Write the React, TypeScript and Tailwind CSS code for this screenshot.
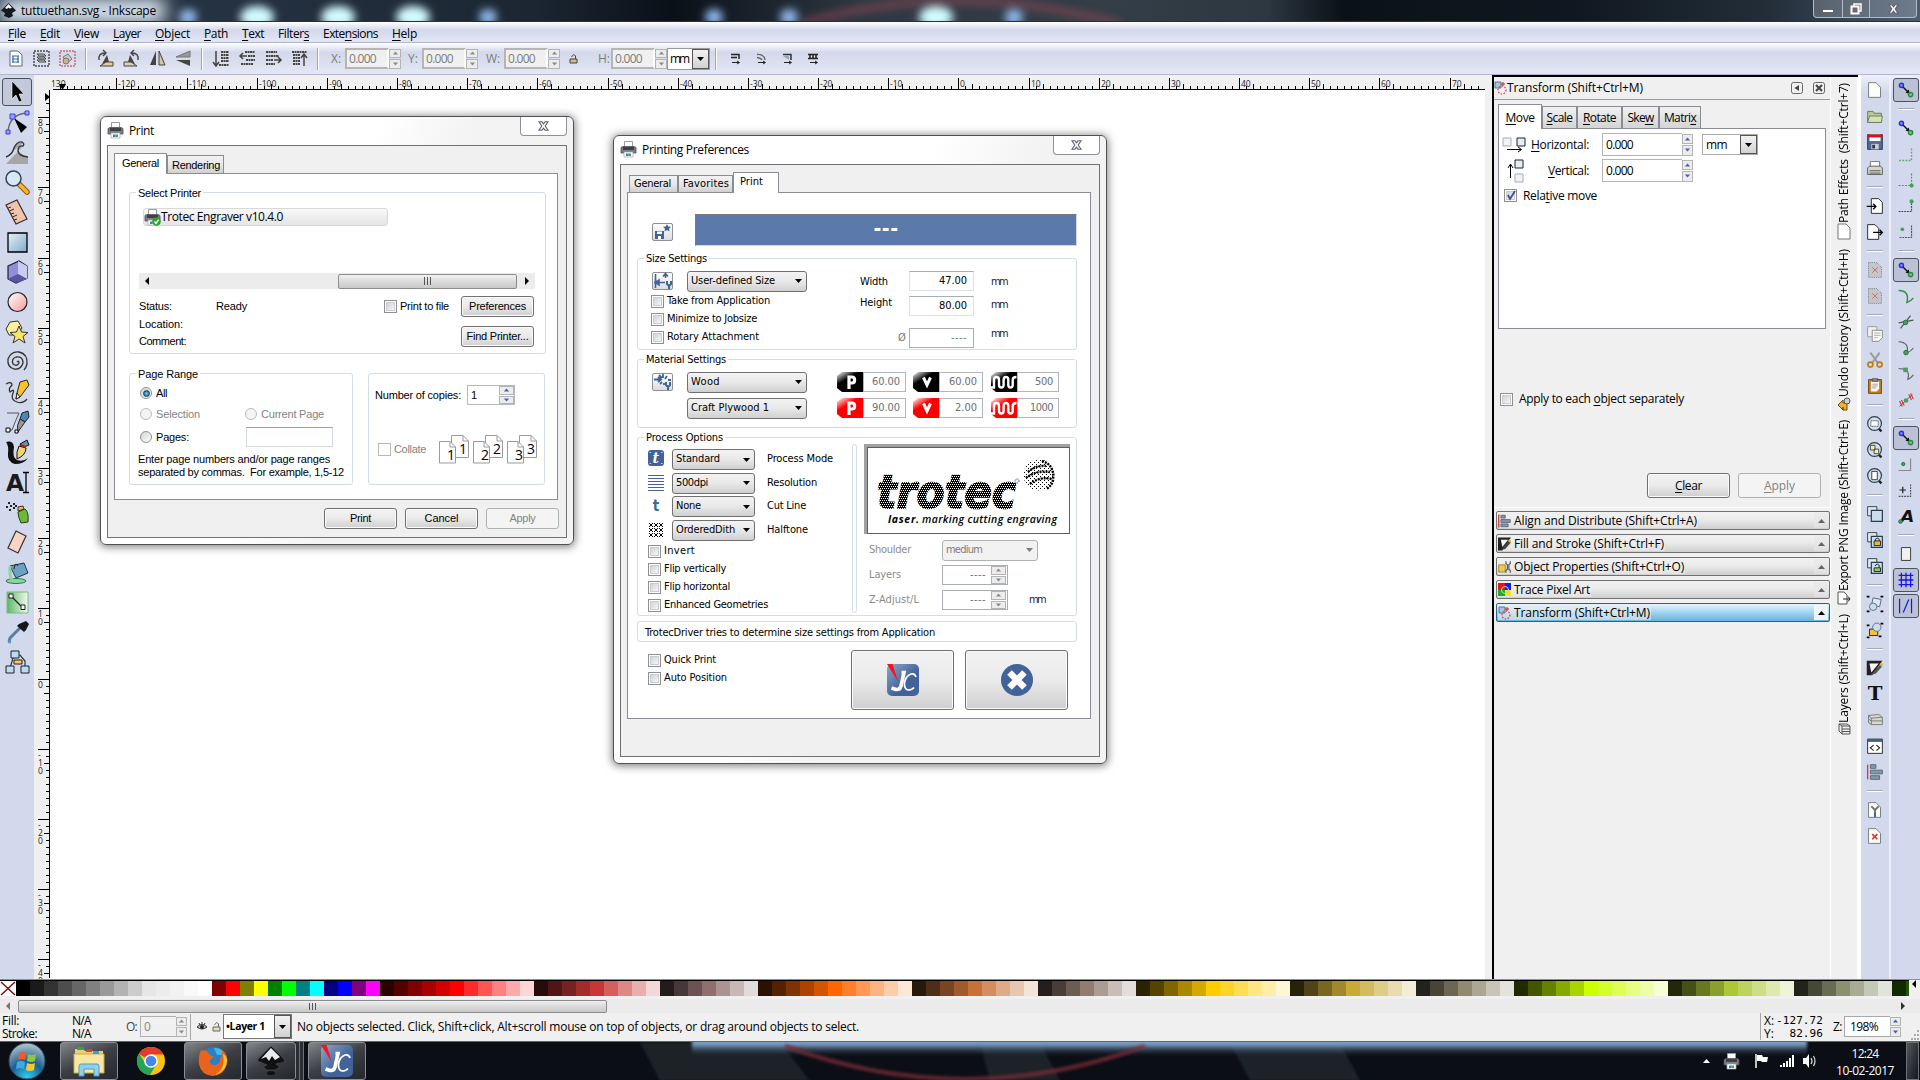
import React, { useLayoutEffect, useRef } from "react";

const UI = "font-['Open_Sans','Noto_Sans',sans-serif]";
const TAHOMA = "font-['DejaVu_Sans_Condensed','DejaVu_Sans',sans-serif]";

/* A single line of text. "_" marks the mnemonic letter, w is the line's length in pixels. */
function T({ t, w, className = "", v = false }: { t: string; w?: number; className?: string; v?: boolean }) {
  const ref = useRef<HTMLSpanElement>(null);
  useLayoutEffect(() => {
    const el = ref.current;
    if (!el || !w) return;
    el.style.letterSpacing = "0px";
    const box = el.getBoundingClientRect();
    const n = t.replace("_", "").length;
    el.style.letterSpacing = `${(w - (v ? box.height : box.width)) / n}px`;
  }, [t, w, v]);
  const i = t.indexOf("_");
  return (
    <span ref={ref} className={`inline-block shrink-0 justify-self-start whitespace-pre ${className}`}>
      {i < 0 ? t : (
        <>
          {i > 0 && t.slice(0, i)}
          <span className="underline underline-offset-2">{t[i + 1]}</span>
          {i + 2 < t.length && t.slice(i + 2)}
        </>
      )}
    </span>
  );
}

function Svg({ w, h, vb, className = "", children }: { w: number; h?: number; vb?: string; className?: string; children: React.ReactNode }) {
  return (
    <svg width={w} height={h ?? w} viewBox={vb ?? `0 0 ${w} ${h ?? w}`} fill="none" className={`shrink-0 overflow-visible ${className}`}>
      {children}
    </svg>
  );
}

function Arrow({ dir, className = "" }: { dir: "up" | "down" | "left" | "right"; className?: string }) {
  const d = { up: "M0 4L3.500 0L7 4Z", down: "M0 0L7 0L3.500 4Z", left: "M4 0L4 8L0 4Z", right: "M0 0L4 4L0 8Z" }[dir];
  const side = dir === "left" || dir === "right";
  return (
    <Svg w={side ? 4 : 7} h={side ? 8 : 4} className={className}>
      <path d={d} fill="currentColor" />
    </Svg>
  );
}

function Spin({ className = "", off = false }: { className?: string; off?: boolean }) {
  return (
    <div className={`flex shrink-0 flex-col gap-px ${off ? "text-[#8a8a8a]" : "text-[#4a5fb0]"} ${className}`}>
      <div className="flex flex-1 items-center justify-center border border-[#b4b4b4] bg-[#ececec]"><Arrow dir="up" className="scale-75" /></div>
      <div className="flex flex-1 items-center justify-center border border-[#b4b4b4] bg-[#ececec]"><Arrow dir="down" className="scale-75" /></div>
    </div>
  );
}

function Btn({ className = "", off = false, children }: { className?: string; off?: boolean; children: React.ReactNode }) {
  return (
    <div className={`flex shrink-0 items-center justify-center rounded-[3px] border ${off ? "border-[#adb2b5] bg-[#f4f4f4] text-[#838383]" : "border-[#707070] bg-linear-to-b from-[#f2f2f2] from-0% via-[#ebebeb] via-48% to-[#cfcfcf] shadow-[inset_0_0_0_1px_#fbfbfb]"} ${className}`}>
      {children}
    </div>
  );
}

function Combo({ className = "", off = false, label, w }: { className?: string; off?: boolean; label: string; w?: number }) {
  return (
    <div className={`flex shrink-0 items-center justify-between rounded-[3px] border pr-1 pl-[3px] ${off ? "border-[#adb2b5] bg-[#f2f2f2] text-[#7c7c7c]" : "border-[#707070] bg-linear-to-b from-[#f3f3f3] from-0% via-[#e9e9e9] via-48% to-[#d0d0d0]"} ${className}`}>
      <T t={label} w={w} />
      <Arrow dir="down" />
    </div>
  );
}

function Box({ on = false, off = false }: { on?: boolean; off?: boolean }) {
  return (
    <div className={`flex size-[13px] shrink-0 items-center justify-center border bg-white ${off ? "border-[#b8b8b8]" : "border-[#8e8f8f]"}`}>
      <div className={`size-[9px] ${off ? "" : "border border-[#c9cdd2] bg-linear-to-br from-[#cfd4d9] to-[#f6f6f6]"}`}>
        {on && (
          <Svg w={9} className="-mt-px">
            <path d="M1 4L3 8L8 0" stroke="#3a4f9c" strokeWidth="1.800" />
          </Svg>
        )}
      </div>
    </div>
  );
}

function Check({ label, w, className = "", off = false }: { label: string; w?: number; className?: string; off?: boolean }) {
  return (
    <div className={`flex h-[18px] shrink-0 items-center gap-[3px] ${off ? "text-[#838383]" : ""} ${className}`}>
      <Box off={off} />
      <T t={label} w={w} />
    </div>
  );
}

function Radio({ label, w, on = false, off = false, className = "" }: { label: string; w?: number; on?: boolean; off?: boolean; className?: string }) {
  return (
    <div className={`flex shrink-0 items-center gap-1 ${off ? "text-[#838383]" : ""} ${className}`}>
      <div className={`flex size-3 items-center justify-center rounded-full border ${off ? "border-[#bcbcbc] bg-[#f4f4f4]" : "border-[#8e8f8f] bg-linear-to-br from-[#d4d4d4] to-white"}`}>
        {on && <div className="size-[7px] rounded-full border border-[#173a5c] bg-radial from-[#6fd0f5] to-[#12527e]" />}
      </div>
      <T t={label} w={w} />
    </div>
  );
}

function Group({ title, w, className = "", children }: { title?: string; w?: number; className?: string; children?: React.ReactNode }) {
  return (
    <div className={`relative shrink-0 rounded-[3px] border border-[#d2dde6] ${className}`}>
      {title && (
        <div className="absolute -top-[8px] left-[6px] flex h-4 items-center bg-white px-[2px]">
          <T t={title} w={w} />
        </div>
      )}
      {children}
    </div>
  );
}

function PrinterIcon({ ok = false, s = 17 }: { ok?: boolean; s?: number }) {
  return (
    <Svg w={s} vb="0 0 17 17">
      <path d="M4.500 .5H12.500V7H4.500Z" fill="#fff" stroke="#9a9a9a" />
      <path d="M1 6.500L3 5.500H14L16 6.500V12H1Z" fill="#7b7f84" stroke="#4b4e52" strokeWidth=".8" />
      <path d="M3 6H14V9H3Z" fill="#3e4145" />
      <path d="M4 11H13V16H4Z" fill="#fff" stroke="#a5a5a5" strokeWidth=".7" />
      <path d="M6 12.500H8.500V15H6Z" fill="#2f7fd1" />
      <path d="M8.500 12.500H11V15H8.500Z" fill="#3ba55a" />
      {ok && (
        <>
          <circle cx="12.500" cy="12.500" r="4.300" fill="#2ba52b" />
          <path d="M10.500 12.500L12 14.300L14.700 10.800" stroke="#fff" strokeWidth="1.400" />
        </>
      )}
    </Svg>
  );
}

function CloseX() {
  return (
    <Svg w={11} h={10}>
      <path d="M1 .8H4L5.500 2.800L7 .8H10L7.200 5L10 9.200H7L5.500 7.200L4 9.200H1L3.800 5Z" fill="#fff" stroke="#5d6070" strokeWidth="1.100" />
    </Svg>
  );
}

function Dialog({ title, tw, className, children }: { title: string; tw: number; className: string; children: React.ReactNode }) {
  return (
    <div className={`absolute flex flex-col rounded-[6px] border border-[#4f5154] bg-linear-110 from-white from-0% via-white via-45% to-[#f3f3f3] to-60% px-[6px] pb-[6px] shadow-[0_1px_9px_1px_rgba(0,0,0,0.5)] ${className}`}>
      <div className={`flex h-[28px] shrink-0 items-start text-[12px] ${UI}`}>
        <div className="flex h-[27px] items-center gap-[5px]"><PrinterIcon /><T t={title} w={tw} /></div>
        <div className="ml-auto flex h-[19px] w-[47px] items-center justify-center rounded-b-[4px] border border-t-0 border-[#8e9099] bg-white"><CloseX /></div>
      </div>
      <div className="flex min-h-0 flex-1 flex-col border border-[#6f7175] bg-[#f0f0f0]">{children}</div>
    </div>
  );
}

function Tab({ t, w, on = false, className = "" }: { t: string; w: number; on?: boolean; className?: string }) {
  return (
    <div className={`flex shrink-0 items-center border border-b-0 border-[#898c95] ${on ? "relative z-10 -mb-px bg-white pb-[2px]" : "bg-linear-to-b from-[#f2f2f2] via-[#e8e8e8] to-[#d0d0d0] pt-px"} ${className}`}>
      <T t={t} w={w} />
    </div>
  );
}

/* ---------- Print dialog ---------- */

function PageStack({ n }: { n: string }) {
  return (
    <Svg w={30} h={30}>
      <path d="M12.500 1.500H24L29.500 7V23.500H12.500Z" fill="#fff" stroke="#9b9b9b" />
      <path d="M24 1.500V7H29.500" stroke="#9b9b9b" />
      <path d="M.5 7.500H11L16.500 13V29H.5Z" fill="#fff" stroke="#9b9b9b" />
      <path d="M11 7.500V13H16.500" stroke="#9b9b9b" />
      <text x="20" y="20" fontFamily="Open Sans" fontSize="14" fill="#000">{n}</text>
      <text x="8" y="26" fontFamily="Open Sans" fontSize="14" fill="#000">{n}</text>
    </Svg>
  );
}

function PrintDialog() {
  return (
    <Dialog title="Print" tw={25} className="top-[116px] left-[100px] h-[429px] w-[474px]">
      <div className="flex flex-1 flex-col pt-[7px] pl-[6px] font-['Liberation_Sans',sans-serif] text-[11px] text-black">
        <div className="flex h-5 items-end">
          <Tab t="General" w={37} on className="h-[21px] w-[53px] pl-[7px]" />
          <Tab t="Rendering" w={48} className="h-[18px] w-[57px] pl-[4px]" />
        </div>
        <div className="flex h-[327px] w-[444px] flex-col border border-[#898c95] bg-white pt-[18px] pl-[14px]">
          <Group title="Select Printer" w={63} className="flex h-[162px] w-[417px] flex-col pt-[15px] pl-[9px]">
            <div className="ml-[4px] flex h-[18px] w-[245px] items-center rounded-[3px] border border-[#d9d9d9] bg-linear-to-b from-[#f8f8f8] to-[#e5e5e5]">
              <PrinterIcon ok />
              <T t="Trotec Engraver v10.4.0" w={122} className={`text-[12px] ${UI}`} />
            </div>
            <div className="mt-[47px] flex h-4 w-[396px] items-center bg-[#ececec] px-[6px]">
              <Arrow dir="left" />
              <div className="ml-[189px] flex h-[15px] w-[179px] items-center justify-center gap-[2px] rounded-[2px] border border-[#8c8c8c] bg-linear-to-b from-[#f2f2f2] via-[#dadada] to-[#c9c9c9]">
                <div className="h-2 w-px bg-[#555]" /><div className="h-2 w-px bg-[#555]" /><div className="h-2 w-px bg-[#555]" />
              </div>
              <Arrow dir="right" className="ml-auto" />
            </div>
            <div className="mt-[7px] flex">
              <div className="grid w-[245px] grid-cols-[77px_1fr] grid-rows-[17px_18px_17px] items-center pt-[2px]">
                <T t="Status:" w={33} /><T t="Ready" w={31} />
                <T t="Location:" w={44} className="col-span-2" />
                <T t="Comment:" w={47} className="col-span-2" />
              </div>
              <Check label="Print to file" w={49} className="h-[21px] w-[77px]" />
              <div className="flex flex-col gap-[9px]">
                <Btn className="h-[21px] w-[73px]"><T t="Preferences" w={57} /></Btn>
                <Btn className="h-[21px] w-[73px]"><T t="Find Printer..." w={62} /></Btn>
              </div>
            </div>
          </Group>
          <div className="mt-[19px] flex gap-[15px]">
            <Group title="Page Range" w={60} className="flex h-[112px] w-[224px] flex-col pt-[11px] pl-[10px]">
              <Radio label="All" w={11} on className="h-4" />
              <div className="mt-[5px] flex h-4 text-[#838383]">
                <Radio label="Selection" w={44} off className="w-[105px]" />
                <Radio label="Current Page" w={63} off />
              </div>
              <div className="mt-[5px] flex h-5 items-center">
                <Radio label="Pages:" w={33} className="w-[106px]" />
                <div className="h-5 w-[87px] border border-[#d5dae2] border-t-[#9a9fa8]" />
              </div>
              <div className="mt-[6px] -ml-[2px] flex flex-col leading-[13px]">
                <T t="Enter page numbers and/or page ranges" w={192} className="self-start" />
                <T t="separated by commas.  For example, 1,5-12" w={206} className="self-start" />
              </div>
            </Group>
            <Group className="flex h-[112px] w-[177px] flex-col pt-[11px] pl-[6px]">
              <div className="flex h-5 items-center">
                <T t="Number of copies:" w={86} />
                <div className="ml-[6px] flex h-5 w-12 items-center justify-between border border-[#b5bac2] pl-[3px]">
                  <span>1</span><Spin className="h-[18px] w-[15px]" />
                </div>
              </div>
              <div className="mt-[29px] flex items-center">
                <Check label="Collate" w={32} off className="w-[64px] pl-[3px]" />
                <div className="flex gap-1"><PageStack n="1" /><PageStack n="2" /><PageStack n="3" /></div>
              </div>
            </Group>
          </div>
        </div>
        <div className="mt-2 flex gap-2 pl-[210px]">
          <Btn className="h-[21px] w-[73px]"><T t="Print" w={21} /></Btn>
          <Btn className="h-[21px] w-[73px]"><T t="Cancel" w={34} /></Btn>
          <Btn off className="h-[21px] w-[73px]"><T t="Apply" w={26} /></Btn>
        </div>
      </div>
    </Dialog>
  );
}

/* ---------- Printing Preferences dialog ---------- */

const BLUE = "#41639a";

function IconBtn({ children }: { children: React.ReactNode }) {
  return (
    <div className="flex h-[18px] w-[21px] shrink-0 items-center justify-center rounded-[2px] border border-[#8e9196] bg-linear-to-b from-white to-[#dcdcdc]">
      <Svg w={19} h={16}>{children}</Svg>
    </div>
  );
}

function Param({ kind, red = false, val, w, className = "" }: { kind: "P" | "v" | "w"; red?: boolean; val: string; w: number; className?: string }) {
  const fill = red ? "#f00" : "#000";
  const id = `shine-${kind}-${red ? "red" : "black"}`;
  return (
    <div className={`flex h-5 shrink-0 text-[#6e6e6e] ${className}`}>
      <Svg w={26} h={20}>
        <defs>
          <linearGradient id={id} x1="0" y1="0" x2=".4" y2=".5">
            <stop offset="0" stopColor="#fff" /><stop offset=".8" stopColor={fill} />
          </linearGradient>
        </defs>
        <path d="M5 0H26V20H5L0 16V4Z" fill={`url(#${id})`} />
        {kind === "P" && <path d="M12 17V5H15C18.500 5 18.500 11 15 11H12" stroke="#fff" strokeWidth="3.200" />}
        {kind === "v" && <path d="M10.500 5.500L14 13L17.500 5.500" stroke="#fff" strokeWidth="3" />}
        {kind === "w" && <path d="M0 15.500H3V8Q3 5 5.500 5T8 8V13Q8 15.500 10.300 15.500T12.600 13V8Q12.600 5 15 5T17.300 8V13Q17.300 15.500 19.500 15.500T21.700 13V8Q21.700 5 25.500 5" stroke="#fff" strokeWidth="2.400" />}
      </Svg>
      <div className="flex flex-1 items-center justify-end border border-[#b1b5bb] bg-white pr-[5px]"><T t={val} w={w} /></div>
    </div>
  );
}

function JcLogo({ s, h }: { s: number; h?: number }) {
  return (
    <svg width={s} height={h ?? s} viewBox="0 0 32 32" preserveAspectRatio="none" fill="none" className="shrink-0">
      <defs>
        <linearGradient id="jcbg" x1="0" y1="0" x2=".6" y2=".6"><stop offset="0" stopColor="#8fa6c8" /><stop offset="1" stopColor={BLUE} /></linearGradient>
      </defs>
      <rect width="32" height="32" rx="5" fill="url(#jcbg)" />
      <path d="M14.500 8.500H17L14 22Q13 26 9 25.500L4.500 24" stroke="#fff" strokeWidth="3.600" />
      <path d="M29 13Q28 9 24 10Q18.500 12 17.500 19Q17 25 21 26Q25 26 27 23.500" stroke="#fff" strokeWidth="1.700" />
      <path d="M0 0H5.500L11 17.500Z" fill="#f5141c" />
    </svg>
  );
}

function TrotecPreview() {
  return (
    <div className="h-[90px] w-[206px] shrink-0 border-t-[3px] border-l-[3px] border-[#a0a0a0] bg-white">
      <div className="h-[87px] w-[203px] border border-[#5f5f5f]">
        <Svg w={201} h={85}>
          <defs>
            <pattern id="dither" width="4" height="4" patternUnits="userSpaceOnUse"><path d="M0 0H4V4H0ZM0 0V1H1V0ZM2 0V1H3V0ZM1 2V3H2V2ZM3 2V3H4V2Z" fill="#000" fillRule="evenodd" /></pattern>
            <pattern id="dots" width="4" height="4" patternUnits="userSpaceOnUse"><path d="M0 0H1V1H0ZM2 2H3V3H2Z" fill="#000" /></pattern>
          </defs>
          <text x="9" y="60" fontFamily="DejaVu Sans" fontWeight="bold" fontStyle="italic" fontSize="46" textLength="139" lengthAdjust="spacingAndGlyphs" fill="url(#dither)" stroke="url(#dither)" strokeWidth="1.500">trotec</text>
          <circle cx="149" cy="33" r="2" stroke="#000" strokeWidth=".8" strokeDasharray="1 1" />
          <circle cx="171" cy="27" r="15.500" fill="url(#dots)" />
          <path d="M160 24Q168 17 178 18M158 30Q168 22 182 24M162 36Q172 28 184 31M174 13Q187 17 185 32Q184 38 178 41" stroke="#000" strokeWidth="2.400" strokeDasharray="2 1" />
          <text x="20" y="75" fontFamily="Open Sans" fontWeight="bold" fontStyle="italic" fontSize="10.500" textLength="31" fill="#000">laser.</text>
          <text x="54" y="75" fontFamily="Open Sans" fontWeight="600" fontStyle="italic" fontSize="10.500" textLength="135" fill="#000">marking cutting engraving</text>
        </Svg>
      </div>
    </div>
  );
}

function Field({ className = "", off = false, children }: { className?: string; off?: boolean; children: React.ReactNode }) {
  return <div className={`flex h-5 w-[65px] shrink-0 items-center justify-end border bg-white pr-[6px] ${off ? "border-[#aaadb2] text-[#777]" : "border-[#dde1e8] border-t-[#a9adb5]"} ${className}`}>{children}</div>;
}

function PreferencesDialog() {
  return (
    <Dialog title="Printing Preferences" tw={107} className="top-[135px] left-[613px] h-[629px] w-[494px]">
      <div className={`flex flex-1 flex-col pt-[8px] pl-[6px] text-[11px] text-black ${TAHOMA}`}>
        <div className="flex h-[19px] items-end pl-[2px]">
          <Tab t="General" w={37} className="h-[17px] w-[49px] pl-[4px]" />
          <Tab t="Favorites" w={46} className="h-[17px] w-[55px] pl-[4px]" />
          <Tab t="Print" w={23} on className="h-[21px] w-[46px] pl-[6px]" />
        </div>
        <div className="flex h-[527px] w-[464px] flex-col border border-[#898c95] bg-white pl-[9px]">
          <div className="mt-[21px] flex h-8">
            <div className="mt-[9px] ml-[15px]">
              <IconBtn>
                <path d="M2 7H11V15H2Z" fill={BLUE} /><path d="M4 7.500H9V10H4ZM5 12H8V15H5Z" fill="#fff" />
                <path d="M14 0L15.200 2.500L18 2.800L16 4.700L16.500 7.500L14 6L11.500 7.500L12 4.700L10 2.800L12.800 2.500Z" fill={BLUE} />
              </IconBtn>
            </div>
            <div className="ml-[22px] flex h-8 w-[382px] items-center justify-center border border-[#d6d6d6] border-t-[#7a7a7a] border-l-[#7a7a7a] bg-[#5b79aa] text-[21px] leading-none font-bold text-white">
              <T t="---" w={25} className="-mt-px" />
            </div>
          </div>
          <Group title="Size Settings" w={61} className="mt-[12px] flex h-[92px] w-[440px] pl-[13px]">
            <div className="flex w-[209px] flex-col pt-[11px]">
              <div className="flex h-[22px] items-center gap-[14px] pl-px">
                <IconBtn>
                  <path d="M2.500 1V15M1 9.500H12M2.500 9.500L6 7V12ZM12.500 1V5M10 3.500L12.500 .5L15 3.500" stroke={BLUE} strokeWidth="1.600" /><path d="M14 8V11L16 13V16M18 8V11L16 13" stroke={BLUE} strokeWidth="2" />
                </IconBtn>
                <Combo label="User-defined Size" w={84} className="h-[21px] w-[120px]" />
              </div>
              <div className="flex flex-col">
                <Check label="Take from Application" w={103} />
                <Check label="Minimize to Jobsize" w={90} />
                <Check label="Rotary Attachment" w={92} />
              </div>
            </div>
            <div className="grid w-[49px] grid-rows-[22px_20px_38px] items-center pt-[12px]">
              <T t="Width" w={28} /><T t="Height" w={32} />
              <span className="self-center pt-[11px] pl-[38px] leading-none text-[#777]">Ø</span>
            </div>
            <div className="flex flex-col pt-[12px]">
              <Field><T t="47.00" w={28} /></Field>
              <Field className="mt-[5px]"><T t="80.00" w={28} /></Field>
              <Field off className="mt-[12px]"><T t="----" w={16} /></Field>
            </div>
            <div className="grid grid-rows-[23px_23px_35px] items-center pt-[12px] pl-[17px] text-[#1c2233]">
              <T t="mm" w={16} /><T t="mm" w={16} /><T t="mm" w={16} />
            </div>
          </Group>
          <Group title="Material Settings" w={80} className="mt-[9px] flex h-[69px] w-[440px] flex-col gap-[4px] pt-[11px] pl-[14px]">
            <div className="flex h-[22px] items-center">
              <IconBtn>
                <path d="M1 5.500H7M5 3L8 5.500L5 8M10 0V4M14 2L12 5M6 1L9 4M15 6H18M7 10L9 8M11 9V11" stroke={BLUE} strokeWidth="1.800" /><path d="M13 8V11L15 13V16M17 8V11L15 13" stroke={BLUE} strokeWidth="2" />
              </IconBtn>
              <Combo label="Wood" w={29} className="ml-[14px] h-[21px] w-[120px]" />
              <Param kind="P" val="60.00" w={28} className="ml-[30px] w-[69px]" />
              <Param kind="v" val="60.00" w={28} className="ml-[7px] w-[70px]" />
              <Param kind="w" val="500" w={18} className="ml-[8px] w-[68px]" />
            </div>
            <div className="flex h-[22px] items-center">
              <Combo label="Craft Plywood 1" w={78} className="ml-[35px] h-[21px] w-[120px]" />
              <Param kind="P" red val="90.00" w={28} className="ml-[30px] w-[69px]" />
              <Param kind="v" red val="2.00" w={22} className="ml-[7px] w-[70px]" />
              <Param kind="w" red val="1000" w={23} className="ml-[8px] w-[68px]" />
            </div>
          </Group>
          <Group title="Process Options" w={77} className="mt-[9px] flex h-[179px] w-[440px] pl-[10px]">
            <div className="flex w-[204px] flex-col pt-[10px]">
              <div className="flex h-[23px] items-center">
                <Svg w={16} className="-mt-1">
                  <rect width="16" height="16" rx="3" fill={BLUE} />
                  <path d="M1.500 2.500H3M13 2.500H14.500M1.500 13.500H3M13 13.500H14.500" stroke="#c5d3e8" />
                  <text x="4.500" y="13" fontFamily="DejaVu Serif" fontWeight="bold" fontStyle="italic" fontSize="14" fill="#fff">t</text>
                </Svg>
                <Combo label="Standard" w={44} className="mr-3 ml-2 h-[21px] w-[83px]" /><T t="Process Mode" w={66} />
              </div>
              <div className="flex h-6 items-center">
                <Svg w={16}><path d="M0 .5H16M0 3.500H16M0 6.500H16M0 9.500H16M0 12.500H16M0 15.500H16" stroke={BLUE} /></Svg>
                <Combo label="500dpi" w={32} className="mr-3 ml-2 h-[21px] w-[83px]" /><T t="Resolution" w={50} />
              </div>
              <div className="flex h-[23px] items-center">
                <span className="w-4 text-center text-[15px] leading-none font-bold text-[#3f6b8d]">t</span>
                <Combo label="None" w={25} className="mr-3 ml-2 h-[21px] w-[83px]" /><T t="Cut Line" w={39} />
              </div>
              <div className="flex h-6 items-center">
                <Svg w={16}>
                  <defs><pattern id="half" x="1" y="1" width="5" height="5" patternUnits="userSpaceOnUse"><path d="M0 0H1V1H0ZM3 0H4V1H3ZM1 1H3V3H1ZM0 3H1V4H0ZM3 3H4V4H3Z" fill="#000" /></pattern></defs>
                  <path d="M1 1H16V16H1Z" fill="url(#half)" />
                </Svg>
                <Combo label="OrderedDith" w={59} className="mr-3 ml-2 h-[21px] w-[83px]" /><T t="Halftone" w={41} />
              </div>
              <div className="flex flex-col">
                <Check label="Invert" w={31} />
                <Check label="Flip vertically" w={62} />
                <Check label="Flip horizontal" w={66} />
                <Check label="Enhanced Geometries" w={104} />
              </div>
            </div>
            <div className="mt-[6px] h-[169px] w-[5px] rounded-[3px] border border-[#d2dde6]" />
            <div className="flex flex-col pt-[6px] pl-[7px] text-[#8b8b8b]">
              <TrotecPreview />
              <div className="mt-[5px] flex h-[22px] items-center pl-[5px]">
                <T t="Shoulder" w={42} className="mr-[31px]" /><Combo off label="medium" w={36} className="h-[21px] w-[96px]" />
              </div>
              <div className="mt-[3px] flex h-[22px] items-center pl-[5px]">
                <T t="Layers" w={32} className="mr-[41px]" />
                <div className="flex h-5 w-[66px] items-center justify-end gap-[5px] border border-[#aaadb2] pr-px text-[#5f7285]"><T t="----" w={16} /><Spin off className="h-[18px] w-[15px]" /></div>
              </div>
              <div className="mt-[3px] flex h-[22px] items-center pl-[5px]">
                <T t="Z-Adjust/L" w={50} className="mr-[23px]" />
                <div className="flex h-5 w-[66px] items-center justify-end gap-[5px] border border-[#aaadb2] pr-px text-[#5f7285]"><T t="----" w={16} /><Spin off className="h-[18px] w-[15px]" /></div>
                <T t="mm" w={16} className="ml-[21px] text-[#1c2233]" />
              </div>
            </div>
          </Group>
          <Group className="mt-[5px] flex h-[21px] w-[440px] items-center pt-[4px] pl-[7px]"><T t="TrotecDriver tries to determine size settings from Application" w={290} /></Group>
          <div className="mt-[8px] flex pl-[11px]">
            <div className="flex w-[203px] flex-col pt-px">
              <Check label="Quick Print" w={52} />
              <Check label="Auto Position" w={63} />
            </div>
            <Btn className="h-[60px] w-[103px]"><JcLogo s={32} /></Btn>
            <Btn className="ml-[11px] h-[60px] w-[103px]">
              <Svg w={32}>
                <circle cx="16" cy="16" r="16" fill={BLUE} />
                <path d="M8.500 8.500L23.500 23.500M23.500 8.500L8.500 23.500" stroke="#fff" strokeWidth="6.500" />
              </Svg>
            </Btn>
          </div>
        </div>
      </div>
    </Dialog>
  );
}

/* ---------- Icons ---------- */

const tools: React.ReactNode[] = [
  <path key="0" d="M7 1V19L11 15L14 22L17 21L14 14H19Z" fill="#000" stroke="#fff" strokeWidth=".6" />,
  <g key="1"><path d="M3 22Q4 5 21 3" stroke="#666" strokeWidth="1.300" /><path d="M9 8L22 17L16 23Z" fill="#000" /><path d="M5 4H10V9H5ZM20 1H24V5H20ZM1 20H5V24H1Z" fill="#9aa0ff" stroke="#3a3ae0" /></g>,
  <g key="2"><path d="M1 17Q8 15 9 8Q12 1 18 3M18 6Q13 6 13 11Q14 16 23 17V24H1Z" fill="#a6a6a6" /><path d="M1 17Q7 15 9 8Q12 1 17 2Q20 4 18 6Q13 5 13 11Q14 16 23 17" stroke="#333" strokeWidth="1.400" /></g>,
  <g key="3"><path d="M14 14L22 22" stroke="#8a5a00" strokeWidth="5.500" strokeLinecap="round" /><path d="M15 15L22 22" stroke="#f7b52c" strokeWidth="3.600" strokeLinecap="round" /><circle cx="8.500" cy="8.500" r="7.500" fill="#d7e8f6" stroke="#33434f" strokeWidth="1.500" /></g>,
  <g key="4"><path d="M1 5L12 0L22 19L11 24Z" fill="#efc3ae" stroke="#3a2a24" strokeWidth="1.200" /><path d="M3 8L6 7M4.500 11L9 9M6 14L9 13M7.500 17L12 15M9 20L12 19" stroke="#3a2a24" /></g>,
  <g key="5"><defs><linearGradient id="rc" x1="0" y1="0" x2="1" y2="1"><stop stopColor="#e5f1f8" /><stop offset="1" stopColor="#83a9c7" /></linearGradient></defs><path d="M3 3H22V22H3Z" fill="url(#rc)" stroke="#000" strokeWidth="1.300" /></g>,
  <g key="6"><path d="M3 6L14 1L22 6V18L11 23L3 19Z" fill="#8d90da" stroke="#222" strokeWidth="1.200" /><path d="M13 1L22 6V19L13 14Z" fill="#c9cbf0" /><path d="M3 19L13 14L22 19L11 23Z" fill="#55579f" /></g>,
  <g key="7"><defs><linearGradient id="cc" x1="0" y1="0" x2="1" y2="1"><stop stopColor="#fff" /><stop offset="1" stopColor="#f59a9a" /></linearGradient></defs><circle cx="12.500" cy="12" r="9.500" fill="url(#cc)" stroke="#222" strokeWidth="1.200" /></g>,
  <g key="8"><path d="M1 9L5 2L13 1L17 8L12 15L4 15Z" fill="#fbf0a0" stroke="#333" /><path d="M14 6L16.500 12L23 12.500L18 16.500L20 23L14 19L8 23L10 16.500L5 12.500L11.500 12Z" fill="#fae46a" stroke="#333" /></g>,
  <path key="9" d="M12 12Q14 10 14 13Q12 17 8 14Q6 9 11 7Q18 6 18 13Q16 20 9 19Q2 17 3 9Q6 1 14 2Q23 4 22 14Q21 18 19 20" stroke="#333" strokeWidth="1.300" />,
  <g key="10"><path d="M1 4Q7 1 7 5Q3 9 5 12Q10 8 8 13Q5 20 12 22Q18 24 22 19" stroke="#333" strokeWidth="1.300" /><path d="M15 2L22 0L24 5L15 17L11 19L12 13Z" fill="#fac229" stroke="#222" /><path d="M12 13L15 17L11 19Z" fill="#fff" stroke="#222" /></g>,
  <g key="11"><path d="M2 3H14Q10 12 7 20H2" stroke="#555" /><path d="M17 3L23 1L24 7L20 12L15 9Z" fill="#4d88b4" stroke="#222" /><path d="M15 9L20 12L13 22Q11 16 15 9Z" fill="#999" stroke="#222" /><path d="M1 18H5V22H1ZM10 20H13V23H10Z" fill="#fff" stroke="#000" /></g>,
  <g key="12"><path d="M1 2Q8 0 9 7Q7 18 12 20Q18 22 23 18Q19 24 10 24Q2 22 3 13Q4 6 1 2Z" fill="#111" /><path d="M15 4L22 0L24 5L17 8Z" fill="#5f8fb4" stroke="#111" /><path d="M14 6L21 8Q21 15 12 19Q11 12 14 6Z" fill="#f2d572" stroke="#111" /><path d="M16 5L21 7" stroke="#d11" strokeWidth="2" /></g>,
  <g key="13"><text x="1" y="21" fontFamily="DejaVu Sans" fontWeight="bold" fontSize="23" textLength="18" lengthAdjust="spacingAndGlyphs" fill="#1b1b1b">A</text><path d="M18 2.500H24M18 22.500H24M21 3V22" stroke="#000" strokeWidth="1.300" /></g>,
  <g key="14"><path d="M13 12L20 9Q24 12 23 22L16 23Q13 17 13 12Z" fill="#6fb83c" stroke="#24400f" /><path d="M13 7L18 6L19 9L13 11Z" fill="#f0c040" stroke="#333" /><path d="M3 3H5M1 7H3M5 6H7M8 4H10M4 10H6M8 8H10M10 6H12" stroke="#222" strokeWidth="2" /></g>,
  <path key="15" d="M11 1L21 6L13 23L3 18Z" fill="#f8d3c6" stroke="#333" strokeWidth="1.200" />,
  <g key="16"><ellipse cx="11" cy="21" rx="10" ry="2.500" fill="#8fd4a4" stroke="#2c7a46" /><path d="M5 6L19 3L23 13L11 18Z" fill="#6ca0c4" stroke="#1f3542" /><path d="M5 6Q4 14 7 20" stroke="#8fd4a4" strokeWidth="3" /><path d="M9 9Q10 1 13 6" stroke="#222" /></g>,
  <g key="17"><defs><linearGradient id="gr" x1="0" y1="0" x2="1" y2="0"><stop stopColor="#5fb567" /><stop offset="1" stopColor="#f2fbf2" /></linearGradient></defs><path d="M2 2H23V23H2Z" fill="url(#gr)" stroke="#79b981" /><path d="M6 6L18 18" stroke="#222" strokeWidth="1.200" /><path d="M4 4H8V8H4ZM16 15H20V19.500H16Z" fill="#fff" stroke="#222" /></g>,
  <g key="18"><path d="M16 7L5 18L4 22" stroke="#5a7e9c" strokeWidth="3" /><path d="M14 4L21 1L24 4L21 10L19 12L12 6Z" fill="#15171a" /><circle cx="4.500" cy="22" r="1.500" fill="#4f9ad6" /></g>,
  <g key="19"><path d="M5 18L9 5H15L20 11V18" stroke="#333" strokeWidth="1.200" /><path d="M6 1H14V8H6ZM1 16H9V23H1ZM16 16H24V23H16Z" fill="#b9dcf5" stroke="#222" /><path d="M9 10H17V14H9Z" fill="#fcc84a" stroke="#222" /></g>,
];

const docShape = <path d="M2 1H10L15 6V17H2Z" fill="#fcfcf8" stroke="#777" />;
const lens = (inner: React.ReactNode) => <g><path d="M12 13L16 17" stroke="#222" strokeWidth="2.500" /><circle cx="8.500" cy="8.500" r="7.500" fill="#cfe2f1" stroke="#2f3e49" strokeWidth="1.300" />{inner}</g>;
const dup = (inner: React.ReactNode) => <g><path d="M1 1H11V11H1Z" fill="#dfeaf3" stroke="#2b3c49" /><path d="M5 5H17V17H5Z" fill="#c9deee" stroke="#2b3c49" strokeWidth="1.300" />{inner}</g>;
const snapArrow = <g><circle cx="4" cy="4" r="2.300" fill="#7b83ff" stroke="#2a2ad8" strokeWidth="1.500" /><path d="M6 6L12 12" stroke="#111" strokeWidth="1.600" /><path d="M13 13L8.500 12L12 8.500Z" fill="#111" /><circle cx="14" cy="14" r="2.300" fill="#7fc08e" stroke="#2b8743" strokeWidth="1.500" /></g>;

type Item = React.ReactNode | "-";
const commands: Item[] = [
  docShape,
  <g><path d="M1 4H7L8 6H16V16H1Z" fill="#b8c796" stroke="#6b7a52" /><path d="M3 9H17L16 16H1Z" fill="#d5dfb8" stroke="#6b7a52" /></g>,
  <g><path d="M1 1H17V17H1Z" fill="#4a6c98" stroke="#26384f" /><path d="M3 1H15V8H3Z" fill="#fff" /><path d="M1 1H17V4H1Z" fill="#d11" /><path d="M5 11H13V17H5Z" fill="#ccc" /><path d="M6 12H9V16H6Z" fill="#335" /></g>,
  <g><path d="M4 2H14V9H4Z" fill="#fff" stroke="#777" /><path d="M1 9L3 7H15L17 9V16H1Z" fill="#d6d6cc" stroke="#555" /><path d="M3 12H15M3 14.500H15" stroke="#555" /></g>,
  "-",
  <g><path d="M5 1H13L17 5V17H5Z" fill="#fff" stroke="#222" /><path d="M0 9.500H9M7 6.500L10 9.500L7 12.500" stroke="#000" strokeWidth="1.400" /></g>,
  <g><path d="M1 1H9L13 5V17H1Z" fill="#fff" stroke="#222" /><path d="M7 9.500H16M14 6.500L17 9.500L14 12.500" stroke="#000" strokeWidth="1.400" /></g>,
  "-",
  <g><path d="M2 1H11L16 6V17H2Z" fill="#c4c6ca" stroke="#777" strokeDasharray="1 1" /><path d="M6 6L12 12M12 6L6 12" stroke="#c66" /></g>,
  <g><path d="M2 1H11L16 6V17H2Z" fill="#c4c6ca" stroke="#777" strokeDasharray="1 1" /><path d="M6 6L12 12M12 6L6 12" stroke="#c66" /></g>,
  "-",
  <g><path d="M1 1H11V12H1Z" fill="#eef0ea" stroke="#999" /><path d="M6 5H17V13L13 17H6Z" fill="#fafaf6" stroke="#888" /><path d="M8 8H15M8 10.500H15M8 13H12" stroke="#aaa" /></g>,
  <g><path d="M4 1L12 12M14 1L6 12" stroke="#999" strokeWidth="2" /><circle cx="4" cy="14" r="2.700" stroke="#c07a12" strokeWidth="1.800" /><circle cx="14" cy="14" r="2.700" stroke="#c07a12" strokeWidth="1.800" /></g>,
  <g><path d="M2 2H16V17H2Z" fill="#c17f22" stroke="#6d4409" /><path d="M4.500 4H13.500V12L11 15H4.500Z" fill="#fafaf6" /><path d="M6 1H12V4H6Z" fill="#888" stroke="#444" strokeWidth=".7" /><path d="M6 7H12M6 9H12M6 11H10" stroke="#999" /></g>,
  "-",
  lens(<path d="M4.500 5.500H12.500V11.500H4.500Z" fill="#fff" stroke="#111" strokeDasharray="1 1" />),
  lens(<path d="M4 4H9V9H4ZM8 8H13V13H8Z" fill="#f5e8a8" stroke="#444" />),
  lens(<path d="M5.500 4H11.500V13H5.500Z" fill="#fff" stroke="#333" />),
  "-",
  dup(null),
  dup(<g><path d="M8 10H15V15H8Z" fill="#f2b42c" stroke="#222" /><path d="M9.500 10V8Q11.500 6 13.500 8V10" stroke="#222" /></g>),
  dup(<g><path d="M8 11H15V15H8Z" fill="#8ecb62" stroke="#222" /><path d="M9.500 9V8Q11.500 6 13.500 8V11" stroke="#222" /></g>),
  "-",
  <g><path d="M6 3H15V11H6Z" fill="#dbe9f4" stroke="#5a6e7e" transform="rotate(12 10 7)" /><circle cx="7" cy="12" r="4" fill="#c9deee" stroke="#5a6e7e" /><path d="M0 1H3M15 1H18M0 17H3M15 17H18" stroke="#000" strokeWidth="2" /></g>,
  <g><path d="M3 8H12V15H3Z" fill="#f6c13a" stroke="#222" /><circle cx="11" cy="6" r="4.500" fill="#c9deee" stroke="#5a6e7e" /><path d="M0 4H3M15 2H18M0 17H3M13 16H16" stroke="#000" strokeWidth="2" /></g>,
  "-",
  <g><path d="M0 1H17L6 17H0Z" fill="#222" /><path d="M3 4H13L5 14Z" fill="#f5f5f5" /><path d="M4 17L8 13L15 5L17 7L10 15Z" fill="#555" /><path d="M14 5L16 3L18 5L16 8Z" fill="#efb82c" /></g>,
  <text x="1" y="16" fontFamily="DejaVu Serif" fontWeight="bold" fontSize="20" textLength="16" lengthAdjust="spacingAndGlyphs" fill="#111">T</text>,
  <g><path d="M2 4L13 3L17 6L5 7ZM2 8L5 10H17L17 6M2 4V8M2 8V12L5 14H17V10M5 7V14" fill="#d8d8d2" stroke="#777" /></g>,
  <g><path d="M1 1.500H17V17H1Z" fill="#fff" stroke="#222" /><path d="M1 3H17" stroke="#3d5d85" strokeWidth="3" /><path d="M7.500 8L4 11L7.500 14M10.500 8L14 11L10.500 14" stroke="#222" strokeWidth="1.200" /></g>,
  <g><path d="M1 1V17" stroke="#c44" strokeWidth="1.500" /><path d="M4 1H10V5H4ZM4 7H17V11H4ZM4 13H14V17H4Z" fill="#8397ad" stroke="#55677a" /></g>,
  "-",
  <g>{docShape}<path d="M5 5L9 9L13 5M9 9V16" stroke="#777" strokeWidth="2.200" /><path d="M9 12V17" stroke="#3060b0" strokeWidth="2" /></g>,
  <g>{docShape}<path d="M6 7L11.500 12.500M11.500 7L6 12.500" stroke="#e03030" strokeWidth="1.800" /></g>,
];

const G = "#4f9a62";
const snaps: { i: Item; on?: boolean }[] = [
  { i: snapArrow, on: true }, { i: "-" },
  { i: snapArrow },
  { i: <path d="M15 3V16H1" stroke="#6aa37a" strokeWidth="1.500" strokeDasharray="2 1.500" /> },
  { i: <g><path d="M15 2V14M1 15H13" stroke="#777" strokeWidth="1.300" strokeDasharray="2 1.500" /><circle cx="15" cy="15" r="2.300" fill={G} /></g> },
  { i: <g><path d="M15 6V15H1" stroke="#444" strokeWidth="1.300" strokeDasharray="2 1" /><circle cx="15" cy="4" r="2.300" fill={G} /></g> },
  { i: <g><path d="M15 2V15H1" stroke="#555" strokeWidth="1.300" strokeDasharray="2 1" /><circle cx="5" cy="6" r="2" fill={G} /></g> },
  { i: "-" },
  { i: snapArrow, on: true },
  { i: <path d="M1 3Q13 3 10 16Q14 15 17 11" stroke="#2f9440" strokeWidth="1.600" /> },
  { i: <g><path d="M1 10L17 7M3 16L14 2" stroke="#555" strokeWidth="1.300" /><circle cx="8.500" cy="9.500" r="2.500" fill={G} stroke="#2b6f3c" /></g> },
  { i: <g><path d="M1 2Q13 3 10 14Q14 13 17 9" stroke="#666" strokeWidth="1.300" /><circle cx="9" cy="14" r="2.500" fill={G} stroke="#2b6f3c" /></g> },
  { i: <g><path d="M1 3L9 4Q13 8 11 15Q14 14 17 10" stroke="#666" strokeWidth="1.300" /><path d="M6 2H11V7H6Z" fill={G} /></g> },
  { i: <g><path d="M2 16L16 3" stroke="#555" /><path d="M2 10L5 16M4 9L7 15M12 3L15 9M14 2L17 8" stroke="#d33" strokeWidth="1.300" /><circle cx="9" cy="9.500" r="2.500" fill={G} /></g> },
  { i: "-" },
  { i: snapArrow, on: true },
  { i: <g><path d="M14 3V16H1" stroke="#888" strokeWidth="1.200" /><circle cx="6" cy="9" r="1.800" fill={G} stroke="#2b6f3c" /></g> },
  { i: <g><path d="M14 3V16H1" stroke="#555" strokeWidth="1.300" strokeDasharray="2 1" /><path d="M2 9H9M5.500 5.500V12.500" stroke="#222" strokeWidth="1.300" /></g> },
  { i: <g><text x="3" y="16" fontFamily="DejaVu Sans" fontWeight="bold" fontStyle="italic" fontSize="18" textLength="15" lengthAdjust="spacingAndGlyphs" fill="#111">A</text><circle cx="3" cy="15" r="2" fill={G} stroke="#2b6f3c" /></g> },
  { i: "-" },
  { i: <path d="M4 2H14V16H4Z" fill="#f0f0ec" stroke="#333" /> },
  { i: <path d="M4 1V17M9 1V17M14 1V17M1 4H17M1 9H17M1 14H17" stroke="#1414ee" strokeWidth="1.400" />, on: true },
  { i: <path d="M2 1V17M15 1V17M12 2L6 16" stroke="#1414ee" strokeWidth="1.300" />, on: true },
];

function IconColumn({ items, className }: { items: { i: Item; on?: boolean }[]; className: string }) {
  return (
    <div className={`flex shrink-0 flex-col items-center bg-linear-to-b from-[#eef0f8] from-0% to-[#d3d9ec] to-2% pt-[2px] ${className}`}>
      {items.map(({ i, on }, k) =>
        i === "-" ? (
          <div key={k} className="flex h-3 w-4 shrink-0 items-center"><div className="h-[2px] w-full border-t border-[#a7a9b3] bg-white" /></div>
        ) : (
          <div key={k} className="flex h-[26px] w-full shrink-0 items-center justify-center">
            <div className={`flex h-6 w-[26px] items-center justify-center ${on ? "rounded-[3px] border border-[#4d5160] bg-[#bcc2d5]" : ""}`}>
              <Svg w={18} className="scale-[.92]">{i}</Svg>
            </div>
          </div>
        )
      )}
    </div>
  );
}

/* ---------- Inkscape window ---------- */

function TitleBar() {
  const glows: [number, boolean][] = [[188, false], [257, true], [338, true], [413, true], [488, false], [714, false], [789, false], [936, true], [1014, false]];
  return (
    <div className={`relative flex h-[21px] shrink-0 overflow-hidden bg-[#0b1119] text-[12px] ${UI}`}>
      <Svg w={1920} h={21} className="absolute inset-0">
        <defs>
          <filter id="soft" x="-50%" y="-50%" width="200%" height="200%"><feGaussianBlur stdDeviation="4" /></filter>
          <filter id="wide" x="-20%" y="-200%" width="140%" height="500%"><feGaussianBlur stdDeviation="9" /></filter>
          <linearGradient id="tb"><stop stopColor="#2c3a4b" /><stop offset=".28" stopColor="#1b2632" /><stop offset=".35" stopColor="#0a1018" /><stop offset=".45" stopColor="#2e3843" /><stop offset=".58" stopColor="#333e48" /><stop offset=".66" stopColor="#2c373f" /><stop offset=".7" stopColor="#0a1119" /><stop offset=".82" stopColor="#0f1820" /><stop offset=".92" stopColor="#222d38" /><stop offset="1" stopColor="#4a5c70" /></linearGradient>
        </defs>
        <path d="M0 0H1920V21H0Z" fill="url(#tb)" />
        <path d="M800 24Q955 -22 1120 24" stroke="#8d4652" strokeWidth="6" opacity=".8" filter="url(#soft)" />
        <path d="M0 -2H165V24H0Z" fill="#dfe9f5" filter="url(#wide)" />
        {glows.map(([x, big]) => <ellipse key={x} cx={x} cy="17" rx={big ? 17 : 9} ry={big ? 11 : 8} fill={big ? "#d2faff" : "#8fb8ea"} filter="url(#soft)" />)}
      </Svg>
      <div className="relative flex w-full items-center">
        <Svg w={17}><path d="M8.500 1L16 8.500L12 11L13 14L9 16L4 14L5 11L1 8.500Z" fill="#15181d" /><path d="M8.500 2L12 6L9.500 6.500L8.500 5.500L7 7L5 6Z" fill="#fff" /></Svg>
        <T t="tuttuethan.svg - Inkscape" w={135} className="ml-1 text-black" />
        <div className="mr-[3px] ml-auto flex h-[18px] w-[104px] self-start rounded-b-[4px] border border-t-0 border-[#b4bcc6] bg-white/20">
          <div className="flex w-[29px] items-center justify-center border-r border-[#b4bcc6]"><div className="mt-1 h-[4px] w-3 border border-[#666] bg-white" /></div>
          <div className="flex w-[27px] items-center justify-center border-r border-[#b4bcc6]">
            <Svg w={12}><path d="M4 1H11V8H4Z" stroke="#fff" strokeWidth="1.500" /><path d="M1.500 3.500H8.500V10.500H1.500Z" fill="#667" stroke="#fff" strokeWidth="2" /></Svg>
          </div>
          <div className="flex flex-1 items-center justify-center"><CloseX /></div>
        </div>
      </div>
    </div>
  );
}

const menus: [string, number, number][] = [
  ["_File", 18, 32], ["_Edit", 20, 34], ["_View", 25, 39], ["_Layer", 28, 42], ["_Object", 35, 49],
  ["_Path", 24, 38], ["_Text", 22, 36], ["Filter_s", 31, 45], ["Exte_nsions", 55, 69], ["_Help", 25, 39],
];

function Sep({ className = "" }: { className?: string }) {
  return <div className={`h-[22px] w-[2px] shrink-0 border-l border-[#a3a5af] bg-white ${className}`} />;
}

function ToolField({ l, lw, className = "" }: { l: string; lw: string; className?: string }) {
  return (
    <div className={`flex shrink-0 items-center text-[#7c7c7c] ${className}`}>
      <span className={lw}>{l}</span>
      <div className="flex h-[21px] w-11 items-center border-2 border-[#b5b5b5] border-r-white bg-[#f0f0f0] pl-[2px]"><T t="0.000" w={27} /></div>
      <Spin off className="h-[20px] w-3" />
    </div>
  );
}

function Cell({ children }: { children: React.ReactNode }) {
  return <div className="flex w-[26px] shrink-0 items-center justify-center"><Svg w={17}>{children}</Svg></div>;
}

function DropBtn({ className = "" }: { className?: string }) {
  return <div className={`flex shrink-0 items-center justify-center border border-[#555] bg-linear-to-b from-[#f2f2f2] to-[#d2d2d2] ${className}`}><Arrow dir="down" /></div>;
}

function Toolbar() {
  const K = "#45443e";
  return (
    <div className={`flex h-[32px] shrink-0 items-center border-b border-[#b3b6ca] bg-linear-to-b from-white from-0% via-[#d3d8eb] via-30% to-[#e3e7f5] pl-[2px] text-[12px] ${UI}`}>
      <Cell><path d="M3 1H11L15 5V16H3Z" fill="#fff" stroke="#666" /><path d="M5 6H12M5 9H12M5 12H12M6 6V13M11 6V13" stroke="#2f6fb8" strokeWidth="1.200" /></Cell>
      <Cell><path d="M1 1H16V16H1Z" stroke="#000" strokeDasharray="2 1" /><path d="M4 4H11L13 6H6ZM4 7H11L13 9H6ZM4 10H11L13 12H6Z" fill="#ccc" stroke={K} /></Cell>
      <Cell><path d="M1 1H16V16H1Z" stroke="#b33" strokeDasharray="2 1" /><path d="M4 7L9 4L13 9L8 13Z" fill="#ccc" stroke="#777" /><circle cx="7" cy="11" r="3" fill="#c9b48c" stroke="#777" /></Cell>
      <Sep className="mx-[5px]" />
      <Cell><path d="M2 10Q1 3 8 3M6 0L9 3L6 6" stroke={K} strokeWidth="1.400" /><path d="M5 14L10 5L12 12Z" fill={K} /><path d="M3 16H16V12L9 12Z" fill="#e3cf96" stroke={K} /></Cell>
      <Cell><path d="M15 10Q16 3 9 3M11 0L8 3L11 6" stroke={K} strokeWidth="1.400" /><path d="M12 14L7 5L5 12Z" fill={K} /><path d="M1 16H14L8 12H1Z" fill="#d8d2c0" stroke={K} /></Cell>
      <Cell><path d="M7 1V15H1Z" fill={K} /><path d="M10 1V15H16Z" fill="#cfc5a8" stroke={K} /></Cell>
      <Cell><path d="M15 7H1L15 1Z" fill="#999" stroke="#777" /><path d="M15 10H1L15 16Z" fill={K} /></Cell>
      <Sep className="mx-[5px]" />
      <Cell><path d="M3 1V15M0 12L3 16L6 12" stroke={K} strokeWidth="1.500" /><path d="M8 2H16M8 5H16M8 8H16M8 11H16M6 15H16" stroke={K} strokeWidth="1.800" strokeDasharray="2 .5" /></Cell>
      <Cell><path d="M1 6H8M4 3L1 6L4 9" stroke={K} strokeWidth="1.500" /><path d="M6 2H16M9 6H16M7 10H16M2 14H14" stroke={K} strokeWidth="1.800" strokeDasharray="2 .5" /></Cell>
      <Cell><path d="M16 10H9M13 7L16 10L13 13" stroke={K} strokeWidth="1.500" /><path d="M1 2H12M1 6H14M1 10H8M1 14H10" stroke={K} strokeWidth="1.800" strokeDasharray="2 .5" /></Cell>
      <Cell><path d="M13 16V5M10 8L13 4L16 8" stroke={K} strokeWidth="1.500" /><path d="M1 2H16M2 5H9M2 8H9M2 11H9M2 14H9" stroke={K} strokeWidth="1.800" strokeDasharray="2 .5" /></Cell>
      <Sep className="ml-[5px]" />
      <ToolField l="X:" lw="w-[14px]" className="ml-[12px]" />
      <ToolField l="Y:" lw="w-[14px]" className="ml-[7px]" />
      <ToolField l="W:" lw="w-[18px]" className="ml-[8px]" />
      <Svg w={9} h={10} className="ml-[9px]"><path d="M1 5H8V9H1Z" fill="#d7be78" stroke="#444" /><path d="M2.500 3Q4.500 -1 6.500 2V5" stroke="#444" /></Svg>
      <ToolField l="H:" lw="w-[13px]" className="ml-[20px]" />
      <div className="flex h-[22px] w-[43px] items-center justify-between border border-[#999] bg-white pl-[2px]"><T t="mm" w={18} /><DropBtn className="h-5 w-[17px]" /></div>
      <Sep className="mr-[4px] ml-[5px]" />
      <Cell><path d="M5 4.500H13V9M5 7.500H11" stroke="#222" strokeWidth="1.500" /><path d="M6 12.500H13M11 11L13.500 12.500L11 14" stroke="#222" /></Cell>
      <Cell><path d="M5 4.500Q12 4 13 10M5 7.500Q9 8 10 10" stroke="#666" strokeWidth="1.300" /><path d="M6 12.500H13M11 11L13.500 12.500L11 14" stroke="#222" /></Cell>
      <Cell><path d="M5 4.500H13V10" stroke="#333" strokeWidth="1.500" /><path d="M5 6H11V10Z" fill="#8fa8bd" /><path d="M6 12.500H13M11 11L13.500 12.500L11 14" stroke="#222" /></Cell>
      <Cell><path d="M4 4.500H14M4 8.500H14M6 4V9M9 4V9M12 4V9" stroke="#222" strokeWidth="1.500" /><path d="M6 12.500H13M11 11L13.500 12.500L11 14" stroke="#222" /></Cell>
    </div>
  );
}

const STEP = 70.16;

function TopRuler() {
  const marks: React.ReactNode[] = [];
  for (let n = -130; n <= 79; n++) {
    const x = Math.round(958.4 - 50 + (n * STEP) / 10) + 0.5;
    if (x < 4) continue;
    const major = n % 10 === 0;
    const m = ((n % 10) + 10) % 10;
    marks.push(<path key={n} d={`M${x} ${major ? 3 : m === 2 ? 9 : 11}V15`} stroke="#000" />);
    if (major) marks.push(<text key={`t${n}`} x={x + 1.5} y="11.500">{n}</text>);
  }
  return (
    <Svg w={1435} h={15} className="bg-[#f0f0f0]">
      <g fontFamily="Open Sans" fontSize="8.500" fill="#222">
        <text x="1" y="11.500">130</text>
        {marks}
      </g>
      <path d="M9 9H16L12.500 15Z" fill="#000" />
      <path d="M3 14.500H1435" stroke="#000" />
    </Svg>
  );
}

function LeftRuler() {
  const marks: React.ReactNode[] = [];
  for (let n = 83; n >= -42; n--) {
    const y = Math.round(678.5 - 75 - (n * STEP) / 10) + 0.5;
    if (y < 18) continue;
    const major = n % 10 === 0;
    const m = ((n % 10) + 10) % 10;
    marks.push(<path key={n} d={`M${major ? 4 : m === 8 ? 10 : 12} ${y}H16`} stroke="#000" />);
    if (major) String(n).split("").forEach((c, k) => marks.push(<text key={`${n}-${k}`} x="4" y={y + 8.5 + k * 8}>{c}</text>));
  }
  return (
    <Svg w={16} h={903} className="bg-[#f0f0f0]">
      <g fontFamily="Open Sans" fontSize="8.500" fill="#222">{marks}</g>
      <path d="M11 18V26L16 22Z" fill="#000" />
      <path d="M15.500 15V903" stroke="#000" />
    </Svg>
  );
}

function TransformIcon() {
  return <Svg w={13} h={14}><path d="M1 1H7V7H1Z" fill="#a9c4dc" stroke="#5b7388" /><circle cx="8" cy="9" r="4" stroke="#d33" strokeWidth="1.200" strokeDasharray="1.500 1.500" /><path d="M9 1V5M7 3H11" stroke="#c22" /></Svg>;
}

const bars: { t: string; w: number; on?: boolean; icon: React.ReactNode }[] = [
  { t: "Align and Distribute (Shift+Ctrl+A)", w: 183, icon: <Svg w={13} h={14} vb="0 0 18 18"><path d="M1 0V18" stroke="#c44" strokeWidth="2" /><path d="M4 1H10V5H4ZM4 7H17V11H4ZM4 13H14V17H4Z" fill="#8397ad" stroke="#44566a" /></Svg> },
  { t: "Fill and Stroke (Shift+Ctrl+F)", w: 150, icon: <Svg w={13} h={14} vb="0 0 18 18"><path d="M0 0H18L6 18H0Z" fill="#222" /><path d="M4 3H14L6 13Z" fill="#f5f5f5" /><path d="M5 17L14 5L18 7L10 16Z" fill="#444" /><path d="M14 4L16 2L18 5L17 8Z" fill="#efb82c" /></Svg> },
  { t: "Object Properties (Shift+Ctrl+O)", w: 170, icon: <Svg w={13} h={14} vb="0 0 18 18"><path d="M1 6H10V16H1Z" fill="#f2c94a" stroke="#8a6a12" /><path d="M11 1V4L13 6V12L11 14V17M17 1V4L15 6V12L17 14V17" stroke="#555" strokeWidth="1.600" /></Svg> },
  { t: "Trace Pixel Art", w: 76, icon: <Svg w={13}><path d="M0 0H7V7H0Z" fill="#e01818" /><path d="M7 0H13V7H7Z" fill="#1520e8" /><path d="M0 7H7V13H0Z" fill="#18b020" /><path d="M7 7H13V13H7Z" fill="#f2e810" /><circle cx="7" cy="7" r="3.500" stroke="#ccc" /></Svg> },
  { t: "Transform (Shift+Ctrl+M)", w: 136, on: true, icon: <TransformIcon /> },
];

const vtabs: { t: string; w: number; cls: string; icon: React.ReactNode }[] = [
  { t: "Path Effects  (Shift+Ctrl+7)", w: 140, cls: "mt-[6px]", icon: <Svg w={14} h={17}><path d="M1 1H9L13 5V16H1Z" fill="#fff" stroke="#777" /></Svg> },
  { t: "Undo History (Shift+Ctrl+H)", w: 148, cls: "mt-[9px]", icon: <Svg w={14} h={14}><path d="M1 8L6 3V6H10V13H6V10L6 13Z" fill="#f0b32c" stroke="#6d4b05" /><circle cx="10" cy="4" r="3" fill="#ccd" stroke="#555" /></Svg> },
  { t: "Export PNG Image (Shift+Ctrl+E)", w: 171, cls: "mt-[9px]", icon: <Svg w={14} h={14}><path d="M1 1H7L10 4V13H1Z" fill="#fff" stroke="#555" /><path d="M6 8H13M11 5.500L13 8L11 10.500" stroke="#222" /></Svg> },
  { t: "Layers (Shift+Ctrl+L)", w: 109, cls: "mt-[9px]", icon: <Svg w={13} h={12}><path d="M1 1L9 1L12 3H4ZM1 1V8L4 11V3M4 6H12M4 8.500H12M4 11H12V3" fill="#eee" stroke="#555" /></Svg> },
];

function NbTab({ t, w, cls, on = false }: { t: string; w: number; cls: string; on?: boolean }) {
  return (
    <div className={`flex shrink-0 items-center justify-center border border-b-0 border-[#898c95] pt-px ${on ? "z-10 -mb-px h-[25px] bg-white" : "h-[22px] bg-linear-to-b from-[#f2f2f2] to-[#d4d4d4]"} ${cls}`}>
      <T t={t} w={w} />
    </div>
  );
}

function NumRow({ icon, label, lw, cls }: { icon: React.ReactNode; label: string; lw: number; cls: string }) {
  return (
    <div className={`flex shrink-0 items-center ${cls}`}>
      <div className="w-[27px] pl-[3px]">{icon}</div>
      <div className="flex w-[63px] justify-end"><T t={label} w={lw} /></div>
      <div className="ml-[13px] flex h-[23px] w-[80px] items-center border border-r-0 border-[#b4b4b4] pl-[3px]"><T t="0.000" w={27} /></div>
      <Spin className="h-[22px] w-[11px]" />
    </div>
  );
}

function Dock() {
  return (
    <div className={`flex h-full w-[366px] shrink-0 border-t-2 border-l-2 border-black bg-[#f0f0f0] text-[12px] text-black ${UI}`}>
      <div className="flex w-[337px] flex-col border-r border-white">
        <div className="flex h-[23px] shrink-0 items-center border-b border-[#9d9d9d] pr-[5px]">
          <TransformIcon />
          <T t="Transform (Shift+Ctrl+M)" w={136} />
          <Svg w={12} className="ml-auto"><rect x=".5" y=".5" width="11" height="11" rx="2" stroke="#666" /><path d="M8 3V9L3.500 6Z" fill="#444" /></Svg>
          <Svg w={12} className="ml-[10px]"><rect x=".5" y=".5" width="11" height="11" rx="2" stroke="#666" /><path d="M3 3L9 9M9 3L3 9" stroke="#444" strokeWidth="2" /></Svg>
        </div>
        <div className="mt-[4px] flex h-[24px] shrink-0 items-end pl-[4px]">
          <NbTab t="_Move" w={29} on cls="w-[44px]" />
          <NbTab t="_Scale" w={26} cls="w-[35px]" />
          <NbTab t="_Rotate" w={33} cls="w-[45px]" />
          <NbTab t="Ske_w" w={26} cls="w-[37px]" />
          <NbTab t="Matri_x" w={32} cls="w-[42px]" />
        </div>
        <div className="ml-[4px] flex h-[201px] w-[328px] shrink-0 flex-col border border-[#898c95] bg-white pt-[4px]">
          <div className="flex items-center">
            <NumRow label="_Horizontal:" lw={58} cls="h-[23px]" icon={<Svg w={24} h={15}><path d="M1 1H9V9H1Z" fill="#eef4f8" stroke="#aab" /><path d="M15 1H23V9H15Z" fill="#e5eef5" stroke="#222" /><path d="M5 12.500H19M16 10L19.500 12.500L16 15" stroke="#000" /></Svg>} />
            <div className="ml-[9px] flex h-[21px] w-[56px] items-center justify-between border border-[#aaa] bg-white pl-[3px]"><T t="mm" w={21} /><DropBtn className="h-full w-[17px]" /></div>
          </div>
          <NumRow label="_Vertical:" lw={41} cls="mt-[3px] h-[23px]" icon={<Svg w={24} h={24}><path d="M13 1H21V9H13Z" fill="#e5eef5" stroke="#222" /><path d="M13 15H21V23H13Z" fill="#eef4f8" stroke="#aab" /><path d="M8.500 19V6M6 9L8.500 5L11 9" stroke="#000" /></Svg>} />
          <div className="mt-[5px] flex h-[17px] items-center gap-[6px] pl-[5px]"><Box on /><T t="Rela_tive move" w={74} /></div>
        </div>
        <div className="mt-[61px] flex h-[18px] shrink-0 items-center gap-[6px] pl-[6px]"><Box /><T t="Apply to each _object separately" w={165} /></div>
        <div className="mt-[65px] flex h-[35px] shrink-0 justify-end gap-2 border-b border-white pr-[9px]">
          <Btn className="h-[25px] w-[83px]"><T t="_Clear" w={27} /></Btn>
          <Btn off className="h-[25px] w-[83px]"><T t="_Apply" w={31} /></Btn>
        </div>
        <div className="mt-[3px] flex flex-col gap-[4px] pl-[2px]">
          {bars.map((b) => (
            <div key={b.t} className={`flex h-[19px] w-[334px] items-center rounded-[2px] border pr-px pl-px ${b.on ? "border-[#2c628b] bg-linear-to-b from-[#e5f4fc] from-0% via-[#98d1ef] via-55% to-[#68b3db]" : "border-[#707070] bg-linear-to-b from-[#f2f2f2] from-0% via-[#ebebeb] via-45% to-[#cfcfcf]"}`}>
              <div className="flex h-[15px] items-center gap-[3px] bg-[#eeeeee]/60 pr-px">{b.icon}<T t={b.t} w={b.w} /></div>
              <div className={`ml-auto flex h-[15px] w-[14px] items-center justify-center ${b.on ? "bg-[#eef4f8] text-black" : "bg-[#e6e6e6]/60 text-[#666]"}`}><Arrow dir="up" /></div>
            </div>
          ))}
        </div>
      </div>
      <div className="flex flex-1 flex-col items-center border-r border-white">
        {vtabs.map((v) => (
          <div key={v.t} className={`flex shrink-0 flex-col items-center ${v.cls}`}>
            <T t={v.t} w={v.w} v className="rotate-180 leading-4 [writing-mode:vertical-rl]" />
            {v.icon}
          </div>
        ))}
      </div>
    </div>
  );
}

const palette = (
  "000000 1a1a1a 333333 4d4d4d 666666 808080 999999 b3b3b3 cccccc e6e6e6 ececec f2f2f2 f9f9f9 ffffff " +
  "800000 ff0000 808000 ffff00 008000 00ff00 008080 00ffff 000080 0000ff 800080 ff00ff " +
  "2b0000 550000 800000 aa0000 d40000 ff0000 ff2a2a ff5555 ff8080 ffaaaa ffd5d5 280b0b 501616 782121 a02c2c c83737 d35f5f de8787 e9afaf f4d7d7 241c1c 483737 6c5353 916f6f ac9393 c8b7b7 e3dbdb " +
  "2b1100 552200 803300 aa4400 d45500 ff6600 ff7f2a ff9955 ffb380 ffccaa ffe6d5 28170b 502d16 784421 a05a2c c87137 d38d5f deaa87 e9c6af f4e3d7 241f1c 483e37 6c5d53 917c6f ac9d93 c8beb7 e3dedb " +
  "2b2200 554400 806600 aa8800 d4aa00 ffcc00 ffd42a ffdd55 ffe680 ffeeaa fff6d5 28220b 504416 786721 a0892c c8ab37 d3bc5f decd87 e9ddaf f4eed7 24221c 484537 6c6753 918a6f aca793 c8c4b7 e3e2db " +
  "222b00 445500 668000 88aa00 aad400 ccff00 d4ff2a ddff55 e5ff80 eeffaa f6ffd5 23280b 445016 677821 89a02c abc837 bcd35f cdde87 dde9af eef4d7 22241c 454837 676c53 8a916f a7ac93 c4c8b7 e2e3db 112b00 225500"
).split(" ");

function Bottom() {
  return (
    <div className={`relative flex h-[62px] shrink-0 flex-col bg-[#f0f0f0] text-[12px] text-black ${UI}`}>
      <div className="flex h-[17px] shrink-0 border-t border-[#8d918d]">
        <div className="flex h-4 w-[1909px] overflow-hidden border-t border-black">
          <Svg w={16} h={15} className="bg-white"><path d="M1 1L15 14M15 1L1 14" stroke="#7a0f0f" strokeWidth="1.500" /></Svg>
          {palette.map((c, k) => <div key={k} className="h-[15px] w-[14px] shrink-0" style={{ backgroundColor: `#${c}` }} />)}
        </div>
        <Arrow dir="left" className="ml-[3px]" />
      </div>
      <div className="mt-[3px] flex h-[14px] shrink-0 items-center bg-[#ebebeb] pr-[15px] pl-[6px]">
        <Arrow dir="left" className="text-[#777]" />
        <div className="ml-2 flex h-[13px] w-[589px] items-center justify-center gap-[2px] rounded-[2px] border border-[#8c8c8c] bg-linear-to-b from-[#f0f0f0] via-[#dadada] to-[#c9c9c9]">
          <div className="h-[7px] w-px bg-[#555]" /><div className="h-[7px] w-px bg-[#555]" /><div className="h-[7px] w-px bg-[#555]" />
        </div>
        <Arrow dir="right" className="ml-auto text-[#333]" />
      </div>
      <div className="flex h-[27px] shrink-0 items-center">
        <div className="grid w-[126px] grid-cols-[70px_1fr] pl-[2px] leading-[13px]">
          <T t="Fill:" w={17} /><T t="N/A" w={19} /><T t="Stroke:" w={35} /><T t="N/A" w={19} />
        </div>
        <T t="O:" w={11} className="mr-[3px] text-[#444]" />
        <div className="flex h-[21px] w-[36px] items-center border border-r-0 border-[#b0b0b0] pl-[3px] text-[#888]">0</div>
        <Spin off className="h-[20px] w-[11px]" />
        <div className="mx-[3px] h-[26px] w-px bg-[#a5a5a5]" />
        <Svg w={12} h={10} className="ml-[2px]"><path d="M1 5Q6 0 11 5Q6 9 1 5Z" fill="#bbb" stroke="#333" /><circle cx="6" cy="5" r="2" fill="#222" /><path d="M3 1L4 3M6 0V2M9 1L8 3" stroke="#333" /></Svg>
        <Svg w={9} h={10} className="ml-[4px]"><path d="M1 5H8V9H1Z" fill="#e8dfb8" stroke="#666" /><path d="M2.500 3Q4.500 -1 6.500 2V5" stroke="#666" /></Svg>
        <div className="ml-[2px] flex h-[25px] w-[69px] items-center justify-between border border-[#777] bg-white pl-[2px]"><T t="•Layer 1" w={39} className="text-[10.5px] font-bold" /><DropBtn className="h-full w-[17px]" /></div>
        <T t="No objects selected. Click, Shift+click, Alt+scroll mouse on top of objects, or drag around objects to select." w={562} className="ml-[5px]" />
        <div className="mr-[3px] ml-auto h-full w-px bg-[#a5a5a5]" />
        <div className="grid w-[69px] grid-cols-[12px_47px] text-[12px] leading-[13px]">
          <span>X:</span><T t="-127.72" w={47} className="font-['DejaVu_Sans_Mono',monospace] text-[11px]" />
          <span>Y:</span><T t="  82.96" w={47} className="font-['DejaVu_Sans_Mono',monospace] text-[11px]" />
        </div>
        <T t="Z:" w={9} className="mr-[2px]" />
        <div className="flex h-[21px] w-[46px] items-center border border-r-0 border-[#a8a8a8] bg-white pl-[5px]"><T t="198%" w={28} /></div>
        <Spin className="h-[20px] w-[11px]" />
        <Svg w={10} className="mr-px ml-[8px] self-end"><path d="M8 1H10M5 5H7M8 5H10M2 9H4M5 9H7M8 9H10" stroke="#aaa" strokeWidth="2" /></Svg>
      </div>
    </div>
  );
}

function TaskBtn({ className, children }: { className: string; children: React.ReactNode }) {
  return <div className={`flex h-[38px] shrink-0 items-center justify-center rounded-[3px] border border-[#8b8f94] bg-linear-155 from-[#83878b] from-0% via-[#3b3e42] via-50% to-[#24272b] ${className}`}>{children}</div>;
}

function TaskBar() {
  return (
    <div className={`relative flex h-[39px] shrink-0 items-center overflow-hidden border-t border-[#5b6675] bg-[#0b0f15] text-[12px] text-white ${UI}`}>
      <Svg w={1920} h={39} className="absolute inset-0">
        <defs><linearGradient id="tk" x1="0" y1="0" x2="0" y2="1"><stop stopColor="#8aaed4" /><stop offset=".4" stopColor="#7596bb" /><stop offset="1" stopColor="#1b2836" stopOpacity="0" /></linearGradient><filter id="b2" x="-5%" y="-50%" width="110%" height="200%"><feGaussianBlur stdDeviation="1.500" /></filter></defs>
        <path d="M640 0H780L810 39H660ZM980 0H1040L1060 39H990ZM1230 0H1340L1360 39H1250Z" fill="#1a2028" filter="url(#b2)" />
        <path d="M692 -5H1807V14H692Z" fill="url(#tk)" filter="url(#b2)" />
        <path d="M785 4Q965 70 1145 4" stroke="#7a2b36" strokeWidth="4" opacity=".8" filter="url(#b2)" />
      </Svg>
      <div className="relative flex h-full w-full items-center">
        <Svg w={38} className="ml-2">
          <defs><radialGradient id="orb" cx=".5" cy=".95" r=".9"><stop stopColor="#2ad0f5" /><stop offset=".5" stopColor="#1b5f93" /><stop offset="1" stopColor="#a7bccb" /></radialGradient></defs>
          <circle cx="19" cy="19" r="18" fill="url(#orb)" stroke="#29455c" />
          <path d="M11 11Q14 9 18 11L17 18Q13 16 10 18Z" fill="#ef5b28" />
          <path d="M20 12Q24 14 28 12L27 19Q23 21 19 19Z" fill="#8cc63e" />
          <path d="M9 20Q13 18 17 20L16 27Q12 25 8 27Z" fill="#3fa9e8" />
          <path d="M19 21Q23 23 27 21L26 28Q22 30 18 28Z" fill="#fcc62d" />
        </Svg>
        <TaskBtn className="ml-[14px] w-[58px]">
          <Svg w={34} h={32}><path d="M3 4H11L13 6H31V28H3Z" fill="#e8cf78" /><path d="M2 9H32V28H2Z" fill="#f8e7a4" stroke="#cba848" /><path d="M5 2H12V5H5Z" fill="#2fa84a" /><path d="M14 4H20V7H14Z" fill="#e23d28" /><path d="M21 6H27V9H21Z" fill="#3b9be0" /><path d="M7 31V21Q7 19 9 19H25Q27 19 27 21V31H22V24H12V31Z" fill="#8fd0ee" stroke="#4f9cc4" /></Svg>
        </TaskBtn>
        <Svg w={30} className="ml-[18px]">
          <circle cx="15" cy="15" r="14" fill="#fbc116" />
          <path d="M15 15L3 8A14 14 0 0 1 27.500 8.500H15Z" fill="#e33b2e" />
          <path d="M3 7.500A14 14 0 0 0 14 29L20 19L9 17Z" fill="#23a456" />
          <circle cx="15" cy="15" r="6.800" fill="#fff" /><circle cx="15" cy="15" r="5.300" fill="#4285f4" />
        </Svg>
        <TaskBtn className="ml-[18px] w-[58px]">
          <Svg w={32}><circle cx="17" cy="15" r="13" fill="#2b7fc4" /><path d="M17 3Q25 2 29 11Q24 9 20 10Z" fill="#49b8e8" /><path d="M4 5Q6 6 8 5Q12 7 13 10L17 12L13 15Q12 20 18 20Q24 19 23 14Q27 8 24 4Q32 10 30 19Q27 30 16 31Q4 30 2 19Q1 12 4 5Z" fill="#e8641b" /><path d="M30 16Q29 27 18 30Q29 24 26 9Q30 11 30 16Z" fill="#fbc02d" /></Svg>
        </TaskBtn>
        <TaskBtn className="ml-[4px] w-[50px]">
          <Svg w={30} h={32}><path d="M15 1L28 14Q30 17 25 18L20 19L24 22L19 25H11L7 22L11 20L4 17Q0 16 3 13Z" fill="#111" stroke="#555" strokeWidth=".6" /><path d="M15 3L24 12L19 15L16 11L13 16L10 12L5 14Z" fill="#e6ebf2" /><ellipse cx="15" cy="28" rx="4" ry="2" fill="#111" /></Svg>
        </TaskBtn>
        <div className="h-[38px] w-[4px] border-r border-[#6d7176] bg-[#2b2e33]" /><div className="h-[38px] w-[4px] border-r border-[#6d7176] bg-[#2b2e33]" />
        <TaskBtn className="ml-[4px] w-[58px]"><JcLogo s={32} /></TaskBtn>
        <div className="ml-auto flex h-full items-center">
          <Arrow dir="up" />
          <div className="ml-[13px]"><PrinterIcon s={17} /></div>
          <Svg w={16} className="ml-[14px]"><path d="M2 1V15" stroke="#fff" strokeWidth="1.500" /><path d="M3 2H8L9 4H14L13 9H8L7 8H3Z" fill="#fff" /></Svg>
          <Svg w={16} className="ml-[9px]"><path d="M2 14V12M5 14V10M8 14V8M11 14V5M14 14V2" stroke="#fff" strokeWidth="2" /></Svg>
          <Svg w={16} className="ml-[7px]"><path d="M1 5H4L7 1V15L4 11H1Z" fill="#fff" /><path d="M9 5Q11 8 9 11M11.500 3Q14.500 8 11.500 13" stroke="#ddd" strokeWidth="1.200" /></Svg>
          <div className="mt-px ml-[17px] flex w-[60px] flex-col items-center leading-[17px]"><T t="12:24" w={27} /><T t="10-02-2017" w={58} /></div>
          <div className="mr-[1px] ml-[11px] h-full w-[13px] border border-[#6d7176] bg-linear-to-br from-[#53575c] to-[#14171b]" />
        </div>
      </div>
    </div>
  );
}

export default function App() {
  return (
    <div className="relative flex h-[1080px] w-[1920px] flex-col overflow-hidden bg-[#f0f0f0]">
      <TitleBar />
      <div className={`flex h-[22px] shrink-0 items-center border-t border-b border-t-[#2a2f38] border-b-[#b3b6ca] bg-linear-to-b from-white from-0% via-[#d3d8eb] via-40% to-[#e3e7f5] pt-[3px] pl-[8px] text-[12px] text-black ${UI}`}>
        {menus.map(([t, w, cell]) => (
          <div key={t} className="shrink-0" style={{ width: cell }}><T t={t} w={w} /></div>
        ))}
      </div>
      <Toolbar />
      <div className="flex h-[904px] shrink-0">
        <div className="flex w-[34px] shrink-0 flex-col items-center bg-[#d3d9ec] pt-[2px]">
          {tools.map((icon, k) => (
            <div key={k} className="flex h-[30px] w-full shrink-0 items-center justify-center">
              <div className={`flex h-[28px] w-[30px] items-center justify-center ${k === 0 ? "rounded-[3px] border border-[#4d5160] bg-[#c3c9da]" : ""}`}><Svg w={24}>{icon}</Svg></div>
            </div>
          ))}
        </div>
        <LeftRuler />
        <div className="flex w-[1435px] shrink-0 flex-col"><TopRuler /><div className="flex-1 bg-white" /></div>
        <div className="w-[7px] shrink-0 bg-[#f0f0f0]" />
        <Dock />
        <div className="w-[3px] shrink-0 bg-white" />
        <IconColumn className="w-[28px]" items={commands.map((i) => ({ i }))} />
        <div className="w-[2px] shrink-0 bg-[#eef0f8]" />
        <IconColumn className="flex-1" items={snaps} />
      </div>
      <Bottom />
      <TaskBar />
      <PrintDialog />
      <PreferencesDialog />
    </div>
  );
}
